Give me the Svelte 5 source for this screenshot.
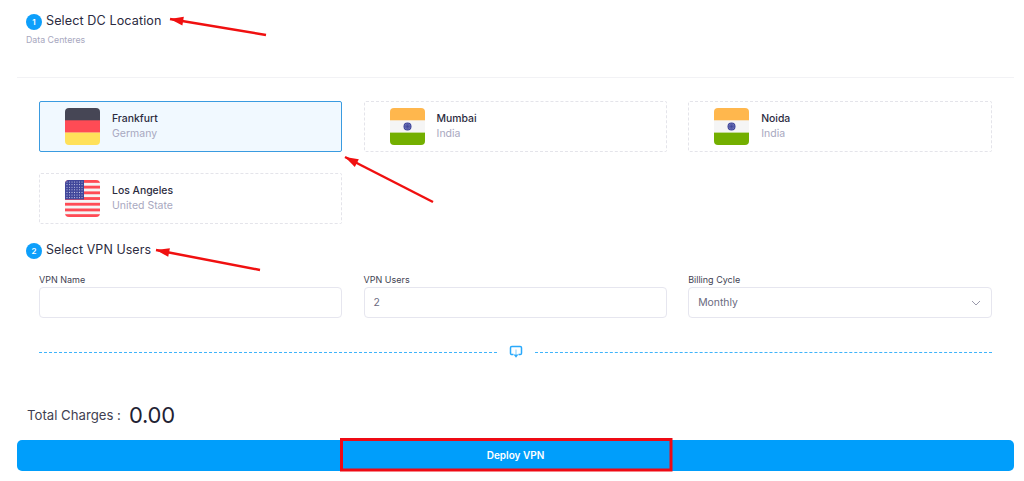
<script>
  const locations = [
    { city: 'Frankfurt', country: 'Germany', flag: 'de', selected: true },
    { city: 'Mumbai', country: 'India', flag: 'in' },
    { city: 'Noida', country: 'India', flag: 'in' },
    { city: 'Los Angeles', country: 'United State', flag: 'us' }
  ];

  const stripes = [0, 1, 2, 3, 4, 5, 6];
  const spokes = [0, 30, 60, 90, 120, 150];

  // red annotation arrows: tail and tip in page coordinates
  const arrows = [
    { x1: 266, y1: 35, x2: 170, y2: 19 },
    { x1: 433, y1: 202, x2: 345, y2: 157 },
    { x1: 260, y1: 270, x2: 156, y2: 250 }
  ];

  function head(a) {
    const angle = Math.atan2(a.y2 - a.y1, a.x2 - a.x1);
    const len = 14;
    const spread = 0.32;
    const p1 = [a.x2 - len * Math.cos(angle - spread), a.y2 - len * Math.sin(angle - spread)];
    const p2 = [a.x2 - len * Math.cos(angle + spread), a.y2 - len * Math.sin(angle + spread)];
    return `${a.x2},${a.y2} ${p1[0]},${p1[1]} ${p2[0]},${p2[1]}`;
  }
</script>

{#snippet flag(kind)}
  <svg class="flag" viewBox="0 0 35 37" aria-hidden="true">
    <defs>
      <clipPath id="flag-clip-{kind}"><rect width="35" height="37" rx="4" /></clipPath>
    </defs>
    <g clip-path="url(#flag-clip-{kind})">
      {#if kind === 'de'}
        <rect width="35" height="13" fill="#464655" />
        <rect y="12.3" width="35" height="12.4" fill="#ff4b55" />
        <rect y="24.6" width="35" height="12.4" fill="#ffe15a" />
      {:else if kind === 'in'}
        <rect width="35" height="13" fill="#ffb74d" />
        <rect y="12.3" width="35" height="12.4" fill="#f5f5f5" />
        <rect y="24.6" width="35" height="12.4" fill="#73af00" />
        <circle cx="17.5" cy="18.5" r="4" fill="#41479b" />
        <circle cx="17.5" cy="18.5" r="2.9" fill="#8f93c8" />
        {#each spokes as s}
          <line x1="17.5" y1="15.2" x2="17.5" y2="21.8" stroke="#41479b" stroke-width="0.7" transform="rotate({s} 17.5 18.5)" />
        {/each}
      {:else}
        <rect width="35" height="37" fill="#f5f5f5" />
        {#each stripes as i}
          <rect y={i * 5.7} width="35" height="2.85" fill="#ff4b55" />
        {/each}
        <rect width="19" height="19.5" fill="#41479b" />
        {#each stripes as row}
          {#each stripes as col}
            <circle cx={2 + col * 2.5} cy={2 + row * 2.6} r="0.55" fill="#c8c9e6" />
          {/each}
        {/each}
      {/if}
    </g>
  </svg>
{/snippet}

<main class="page">
  <section class="intro">
    <h2 class="step"><span class="badge">1</span>Select DC Location</h2>
    <p class="hint">Data Centeres</p>
  </section>

  <section class="locations">
    {#each locations as loc}
      <div class="location" class:selected={loc.selected}>
        {@render flag(loc.flag)}
        <div class="place">
          <span class="city">{loc.city}</span>
          <span class="country">{loc.country}</span>
        </div>
      </div>
    {/each}
  </section>

  <h2 class="step users"><span class="badge">2</span>Select VPN Users</h2>

  <section class="fields">
    <div class="field">
      <span class="label">VPN Name</span>
      <div class="control"></div>
    </div>
    <div class="field">
      <span class="label">VPN Users</span>
      <div class="control">2</div>
    </div>
    <div class="field">
      <span class="label">Billing Cycle</span>
      <div class="control select">
        Monthly
        <svg width="10" height="6" viewBox="0 0 10 6" aria-hidden="true">
          <path d="M1 1l4 4 4-4" fill="none" stroke="#9a9aac" stroke-width="1" />
        </svg>
      </div>
    </div>
  </section>

  <div class="separator">
    <span class="dash"></span>
    <svg width="14" height="14" viewBox="0 0 14 14" aria-hidden="true">
      <path d="M4.5 9.5H2.8A1.3 1.3 0 0 1 1.5 8.2V2.8a1.3 1.3 0 0 1 1.3-1.3h8.4a1.3 1.3 0 0 1 1.3 1.3v5.4a1.3 1.3 0 0 1-1.3 1.3H9.5" fill="none" stroke="#29a9fb" stroke-width="1.5" />
      <path d="M7 4.5v5" stroke="#a9dcfd" stroke-width="1.4" />
      <path d="M4.6 9.6h4.8L7 12.8z" fill="#29a9fb" />
    </svg>
    <span class="dash"></span>
  </div>

  <div class="total">
    <span class="total-label">Total Charges :</span>
    <span class="amount">0.00</span>
  </div>

  <div class="deploy">Deploy VPN</div>
</main>

<!-- annotations drawn on top of the screenshot -->
<svg class="marks" width="1024" height="481" aria-hidden="true">
  {#each arrows as a}
    <line x1={a.x1} y1={a.y1} x2={a.x2} y2={a.y2} stroke="#f01010" stroke-width="2.5" />
    <polygon points={head(a)} fill="#f01010" />
  {/each}
  <rect x="341.5" y="439.5" width="329.5" height="30.5" fill="none" stroke="#ee0a14" stroke-width="3" />
</svg>

<style>
  :global(body) {
    background: #fff;
  }

  .page {
    width: 1024px;
    height: 481px;
    box-sizing: border-box;
    padding: 0 10px 0 17px;
    overflow: hidden;
    font-family: Inter, "Open Sans", "Liberation Sans", sans-serif;
    color: #2b2b40;
  }

  .intro {
    height: 78px;
    box-sizing: border-box;
    padding: 13px 0 0 9px;
    border-bottom: 1px solid #f2f2f5;
  }

  .step {
    margin: 0;
    display: flex;
    align-items: center;
    gap: 4px;
    height: 16px;
    font-size: 12.6px;
    line-height: 16px;
    font-weight: 400;
    letter-spacing: 0.1px;
    color: #2b2b40;
  }

  .badge {
    width: 16px;
    height: 16px;
    margin-top: 2px;
    border-radius: 50%;
    background: #0d9ffb;
    color: #fff;
    font-size: 8px;
    font-weight: 600;
    text-align: center;
    line-height: 16px;
    flex-shrink: 0;
  }

  .hint {
    margin: 5px 0 0;
    font-size: 8.8px;
    line-height: 11px;
    color: #a8a8c0;
  }

  .locations {
    display: grid;
    grid-template-columns: repeat(3, 1fr);
    gap: 21px 21.3px;
    margin: 23px 22.5px 0 22px;
  }

  .location {
    height: 51px;
    box-sizing: border-box;
    display: flex;
    align-items: center;
    gap: 12px;
    padding-left: 25px;
    border: 1px dashed #e4e4ea;
    border-radius: 2px;
  }

  .location.selected {
    background: #f1f9ff;
    border: 1px solid #3a9be0;
  }

  .flag {
    width: 35px;
    height: 37px;
    flex-shrink: 0;
  }

  .place {
    display: flex;
    flex-direction: column;
    gap: 2px;
    margin-bottom: 1px;
  }

  .city {
    font-size: 10.4px;
    line-height: 14px;
    font-weight: 500;
    color: #2b2b40;
  }

  .country {
    font-size: 10.5px;
    line-height: 12px;
    color: #a8a8c0;
  }

  .users {
    margin: 18px 0 0 9px;
    font-size: 12.4px;
  }

  .fields {
    display: grid;
    grid-template-columns: repeat(3, 1fr);
    gap: 21.3px;
    margin: 15px 22.5px 0 22px;
  }

  .field {
    display: flex;
    flex-direction: column;
    gap: 1px;
  }

  .label {
    font-size: 9px;
    line-height: 13px;
    color: #3f3f52;
  }

  .control {
    height: 31px;
    box-sizing: border-box;
    display: flex;
    align-items: center;
    padding: 0 9px;
    border: 1px solid #e6e6ef;
    border-radius: 4px;
    font-size: 10.4px;
    color: #6a6a80;
  }

  .select {
    justify-content: space-between;
    padding-right: 10px;
  }

  .separator {
    display: flex;
    align-items: center;
    gap: 12px;
    margin: 27px 22px 0;
    height: 14px;
  }

  .dash {
    flex: 1;
    border-top: 1px dashed #3fb4fb;
  }

  .total {
    display: flex;
    align-items: center;
    gap: 8px;
    margin: 41px 0 0 10px;
    height: 30px;
  }

  .total-label {
    font-size: 13.2px;
    color: #3f3f52;
  }

  .amount {
    font-size: 22px;
    letter-spacing: -0.2px;
    color: #1f2233;
  }

  .deploy {
    height: 31px;
    margin-top: 10px;
    border-radius: 5px;
    background: #009efb;
    color: #fff;
    font-size: 10px;
    font-weight: 600;
    line-height: 31px;
    text-align: center;
  }

  .marks {
    position: absolute;
    top: 0;
    left: 0;
    pointer-events: none;
  }
</style>
